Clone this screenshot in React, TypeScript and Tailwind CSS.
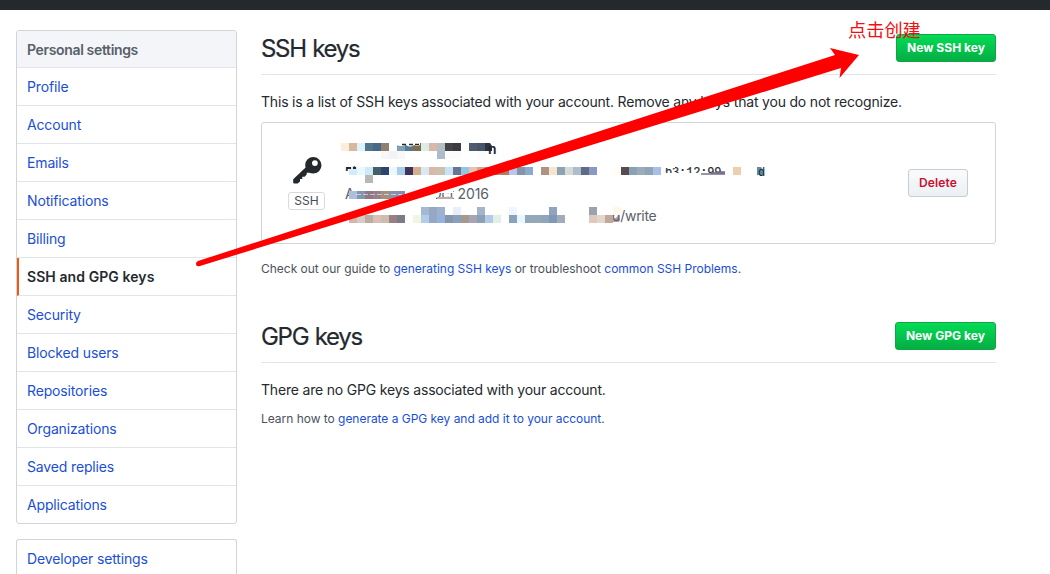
import React from "react";

const navItems: string[] = [
  "Profile",
  "Account",
  "Emails",
  "Notifications",
  "Billing",
  "SSH and GPG keys",
  "Security",
  "Blocked users",
  "Repositories",
  "Organizations",
  "Saved replies",
  "Applications",
];

const CELL = 8;

// Each row: y offset, then [column, colour] pairs.
const mosaic: { y: number; cells: [number, string][] }[] = [
  {
    y: 0,
    cells: [
      [0, "#fbeedb"], [1, "#d9b79d"], [2, "#dbf3fd"], [3, "#51768c"], [4, "#44698a"], [5, "#92806f"],
      [7, "#7fa0b3"], [8, "#557a92"], [9, "#836b4e"], [10, "#dcede8"], [11, "#dab8a8"], [12, "#b6bdc3"],
      [13, "#434647"], [14, "#3f3943"], [16, "#4f5c6e"], [17, "#485569"],
    ],
  },
  { y: 8, cells: [[5, "#f8f8fa"], [6, "#f3f3f5"], [7, "#f8f8f9"], [12, "#adbccb"], [13, "#fcfcfc"], [14, "#fcfcfc"], [17, "#fcfcfc"]] },
  {
    y: 24,
    cells: [
      [1, "#d3edf8"], [2, "#e8f8ff"], [3, "#d0e9f5"], [4, "#455f69"], [5, "#2d446c"], [6, "#eef7fd"],
      [7, "#a9cfe8"], [8, "#3e3359"], [9, "#d5ae92"], [10, "#d8e8f5"], [11, "#dab8a6"], [12, "#cbc1ae"],
      [13, "#c6e3f7"], [14, "#6b7590"], [15, "#93c5e8"], [16, "#e8c4b0"], [17, "#c9a890"], [18, "#a98a80"],
      [19, "#b0907c"], [20, "#b07d68"], [21, "#bcc6e6"], [22, "#8793a9"], [23, "#8ba9d3"], [25, "#b09283"],
      [26, "#f7e6cf"], [27, "#8aa4b6"], [28, "#d8dad5"], [29, "#aebccb"], [30, "#5f6b84"], [31, "#8799c4"],
      [34, "#fffdf5"], [35, "#574b52"], [36, "#8ba0b3"], [37, "#9aabbc"], [38, "#8fa4b4"], [39, "#a8bfe5"],
      [49, "#ecd0ae"],
    ],
  },
  { y: 32, cells: [[3, "#b8b8b6"]] },
  {
    y: 48,
    cells: [[1, "#adbfda"], [2, "#8296b2"], [3, "#8f7785"], [4, "#96818a"], [5, "#a5907f"], [6, "#8b8fa8"], [7, "#8091b3"]],
  },
  {
    y: 64,
    cells: [
      [10, "#a5b8d0"], [11, "#96a8c4"], [12, "#9fb1cb"], [14, "#e9eff9"], [17, "#a4b5c9"], [19, "#fffef8"],
      [21, "#eef7ff"], [26, "#92a3bd"], [31, "#9aa3ab"], [34, "#fff8ea"],
    ],
  },
  {
    y: 72,
    cells: [
      [1, "#d1b5ae"], [2, "#d6cbc6"], [3, "#bbaea0"], [4, "#dbbeb5"], [5, "#cdbdb0"], [6, "#978082"],
      [7, "#807986"], [9, "#f2f5e4"], [10, "#b3cde9"], [11, "#92a9c9"], [12, "#95b1dd"], [13, "#8595ac"],
      [14, "#8aa0ba"], [15, "#a4998c"], [16, "#a8a3b5"], [17, "#8ba1b7"], [18, "#b5cae8"], [19, "#e1f0e6"],
      [21, "#8ba2b9"], [22, "#e6f8ff"], [23, "#93a8b9"], [24, "#93a8b9"], [25, "#8fa5bb"], [26, "#7f98b3"],
      [27, "#a4abbd"], [31, "#dfc9bc"], [32, "#e2d6cd"], [33, "#c0a89c"],
    ],
  },
];

function KeyDetails() {
  return (
    <svg width="440" height="84" viewBox="0 0 440 84" className="block font-['Inter',sans-serif]">
      <text x="4" y="34" fontSize="13" fontWeight="600" fill="#24292e">Fi</text>
      <rect x="4" y="28" width="14" height="8" fill="#fff" />
      <text x="324" y="33" fontSize="12" fontFamily="Liberation Mono, monospace" fill="#24292e" stroke="#24292e" strokeWidth="0.2">b3:12:99</text>
      <rect x="322" y="20" width="12" height="5" fill="#fff" />
      <rect x="322" y="30" width="36" height="5" fill="#fff" />
      <rect x="358" y="31" width="42" height="5" fill="#fff" />
      <text x="4" y="56" fontSize="14" fill="#586069">A</text>
      <text x="90" y="56" fontSize="14" letterSpacing="-0.15" fill="#586069">Oct 2016</text>
      <rect x="88" y="44" width="24" height="6" fill="#fff" />
      <rect x="88" y="50" width="7" height="8" fill="#fff" />
      <rect x="96" y="54" width="16" height="2" fill="#c3a9a5" />
      <path d="M264 78q11 -1 14 -7v8h-14z" fill="#b8a098" />
      <text x="271" y="78" fontSize="14" letterSpacing="-0.3" fill="#586069">d/write</text>
      <rect x="270" y="64" width="8" height="8" fill="#fff" />
      {mosaic.map((row) =>
        row.cells.map(([col, fill]) => (
          <rect key={`${row.y}-${col}`} x={col * CELL} y={row.y} width={CELL} height={CELL} fill={fill} shapeRendering="crispEdges" />
        )),
      )}
      <path d="M144 0h5l2 3v5h-7z" fill="#2c3347" />
      <text x="147" y="11" fontSize="14" fontWeight="600" fill="#24292e">n</text>
      <path d="M55 0h24v2q-3 2 -6 0q-4 3 -8 0q-4 2 -10 0z" fill="#fff" />
      <path d="M61 1.500h4M68 1.500h4M74 1.500h4" stroke="#24292e" strokeWidth="1.500" />
      <path d="M6 25h4M12 25h3" stroke="#24292e" strokeWidth="2" />
      <path d="M15 51.500h46" stroke="#fff" strokeOpacity=".55" strokeDasharray="5 2" />
      <path d="M360 31h24M370 30h14M376 29h8" stroke="#77718a" strokeWidth="1.500" />
      <path d="M416 24h4l3 4v4h-7z" fill="#5b8fa9" />
      <text x="417" y="33" fontSize="12.200" fontFamily="Liberation Mono, monospace" fill="#24292e">d</text>
    </svg>
  );
}

function SectionHeader({ title, action }: { title: string; action: string }) {
  return (
    <div className="flex h-[45px] items-start justify-between border-b border-[#e1e4e8]">
      <h2 className="pt-px text-[24px] leading-[36px] font-normal tracking-[-1.3px] [word-spacing:1px] [-webkit-text-stroke:0.2px_#24292e]">{title}</h2>
      <button className="mt-1 h-7 rounded-[3px] border border-[#12a542] bg-linear-to-b from-[#02dc55] to-[#04ae44] px-[10px] text-[12px] leading-[26px] font-bold tracking-[0.04px] text-white">
        {action}
      </button>
    </div>
  );
}

export default function App() {
  return (
    <div className="relative h-[574px] w-[1050px] overflow-hidden bg-white font-['Inter',sans-serif] text-[14px] tracking-[-0.15px] text-[#24292e]">
      <header className="h-[10px] bg-[#24292e]" />
      <div className="flex gap-6 pt-5 pl-4">
        <aside className="w-[221px] shrink-0">
          <nav className="overflow-hidden rounded-[3px] border border-[#d1d5da]">
            <h3 className="h-[37px] border-b border-[#e1e4e8] bg-[#f3f5f8] pl-[10px] leading-[37px] font-semibold tracking-[-0.35px] text-[#586069]">
              Personal settings
            </h3>
            {navItems.map((item) =>
              item === "SSH and GPG keys" ? (
                <a key={item} className="block h-[38px] border-b border-l-2 border-b-[#e1e4e8] border-l-[#f05a10] pl-2 leading-[38px] font-semibold tracking-[0.08px]">
                  {item}
                </a>
              ) : (
                <a key={item} className="block h-[38px] border-b border-[#e1e4e8] pl-[10px] leading-[38px] text-[#1a4fd6] last:h-[37px] last:border-b-0">
                  {item}
                </a>
              ),
            )}
          </nav>
          <nav className="mt-[15px] rounded-t-[3px] border border-b-0 border-[#d1d5da]">
            <a className="block h-[38px] pl-[10px] leading-[38px] text-[#1a4fd6]">Developer settings</a>
          </nav>
        </aside>
        <main className="w-[735px]">
          <SectionHeader title="SSH keys" action="New SSH key" />
          <p className="mt-4 h-[31px] leading-[22px] tracking-[-0.19px]">
            This is a list of SSH keys associated with your account. Remove any keys that you do not recognize.
          </p>
          <div className="flex h-[122px] items-start rounded-[3px] border border-[#d1d5da]">
            <div className="ml-[26px] flex w-[37px] flex-col items-center pt-[32px]">
              <svg width="30" height="30" viewBox="0 0 30 30" fill="#24292e">
                <path
                  fillRule="evenodd"
                  d="M21.200 2a8 8 0 0 0-8 8c0 .9.100 1.700.4 2.500L1.200 24.300v3.200c0 .500.700 1.100 1.300 1.100h3.200l2.300-2.200V24h2.300v-2.300h2.300l2.100-2.200v-1.700h2.500c1.200.5 2.600.800 4 .8a8.300 8.300 0 0 0 0-16.600Zm1.700 3.200a2.900 2.900 0 1 1 0 5.800 2.900 2.900 0 0 1 0-5.800Z"
                />
              </svg>
              <span className="mt-[7px] flex h-[18px] w-[37px] items-center justify-center rounded-[3px] border border-[#d8dadd] text-[12px] tracking-normal text-[#444d56]">SSH</span>
            </div>
            <div className="ml-4 pt-5">
              <KeyDetails />
            </div>
            <button className="mt-[46px] mr-[27px] ml-auto h-7 w-[60px] rounded-[3px] border border-[#c8cdd1] bg-linear-to-b from-[#fafbfc] to-[#ebf0f4] text-[12px] font-semibold tracking-[0.15px] text-[#cb0d31]">
              Delete
            </button>
          </div>
          <p className="mt-[15px] h-[59px] text-[12px] leading-[20px] tracking-[-0.02px] text-[#4c5259]">
            Check out our guide to <a className="text-[#1a4fd6]">generating SSH keys</a> or troubleshoot{" "}
            <a className="text-[#1a4fd6]">common SSH Problems</a>.
          </p>
          <SectionHeader title="GPG keys" action="New GPG key" />
          <p className="mt-4 h-[30px] leading-[22px] tracking-[-0.19px]">There are no GPG keys associated with your account.</p>
          <p className="text-[12px] leading-[20px] tracking-[-0.03px] text-[#4c5259]">
            Learn how to <a className="text-[#1a4fd6]">generate a GPG key and add it to your account</a>.
          </p>
        </main>
      </div>
      <svg className="pointer-events-none absolute top-0 left-0" width="1050" height="300" viewBox="0 0 1050 300" fill="#f00">
        <path d="M198 261L835 55L830 48L859 55L839.500 78L841 68L200 266Q196 267 196 264Q196 262 198 261Z" />
      </svg>
      <span className="absolute top-[16px] left-[848px] font-['Noto_Sans_CJK_SC',sans-serif] text-[18.200px] leading-[26px] tracking-normal whitespace-nowrap text-[#f00f0f]">
        点击创建
      </span>
    </div>
  );
}
